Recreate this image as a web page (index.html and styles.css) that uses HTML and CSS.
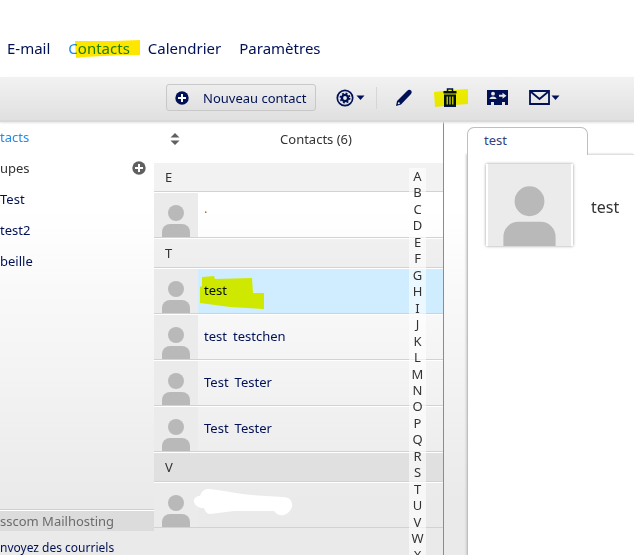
FILE: index.html
```
<!DOCTYPE html>
<html lang="fr">

<head>
    <meta charset="UTF-8" />
    <title>Contacts</title>
    <link rel="stylesheet" href="styles.css">
</head>

<body>

    <!-- Silhouette réutilisée par toutes les photos -->
    <svg class="defs" width="0" height="0">
        <symbol id="person" viewBox="0 0 44 44">
            <circle cx="22" cy="20" r="8" />
            <path d="M8 44v-5a8 8 0 0 1 8-8h12a8 8 0 0 1 8 8v5z" />
        </symbol>
        <symbol id="plus" viewBox="0 0 14 14">
            <circle cx="7" cy="7" r="6.7" />
            <path d="M7 3v8M3 7h8" stroke="#fff" stroke-width="2" />
        </symbol>
        <symbol id="caret" viewBox="0 0 9 5">
            <path d="M0.5 0.5h8L4.500 5z" />
        </symbol>
    </svg>

    <nav class="nav">
        <a href="#">E-mail</a>
        <a href="#" class="active">Contacts
            <svg class="marker marker-nav" width="66" height="20" viewBox="0 0 66 20">
                <path d="M1 2L40 2L66 1L66 16L50 16L10 18L2 19z" fill="#ffe600" />
            </svg>
        </a>
        <a href="#">Calendrier</a>
        <a href="#">Paramètres</a>
    </nav>

    <div class="toolbar">
        <button class="new-contact">
            <svg width="14" height="14"><use href="#plus" /></svg>
            Nouveau contact
        </button>
        <button class="tool" aria-label="Options">
            <svg width="18" height="18" viewBox="0 0 18 18">
                <circle cx="9" cy="9" r="7.700" fill="none" stroke="#001155" stroke-width="1.700" />
                <circle cx="9" cy="9" r="3.100" fill="none" stroke="#001155" stroke-width="2.400" />
                <circle cx="9" cy="9" r="4.700" fill="none" stroke="#001155" stroke-width="1.600" stroke-dasharray="1.850 1.850" />
            </svg>
            <svg width="9" height="5"><use href="#caret" /></svg>
        </button>
        <span class="separator"></span>
        <button class="tool" aria-label="Modifier">
            <svg width="18" height="18" viewBox="0 0 18 18">
                <path d="M1 17l1-5L12 2c1.500-1.500 3-1.500 4-.5s1 2.500-.5 4L6 15.500z" />
                <circle cx="3.800" cy="14.200" r="1" fill="#e8e8e8" />
            </svg>
        </button>
        <button class="tool trash" aria-label="Supprimer">
            <svg width="14" height="20" viewBox="0 0 14 20">
                <path d="M4.500 3.500v-2.500h5v2.500" fill="none" stroke="#001155" stroke-width="1.500" />
                <path d="M0.500 3h13v2.500h-13zM1 6.500h12v12.500h-12z" />
                <path d="M4.200 8.500v8M7 8.500v8M9.800 8.500v8" stroke="#e8e8e8" stroke-width="1.200" />
            </svg>
            <svg class="marker marker-trash" width="34" height="20" viewBox="0 0 34 20">
                <path d="M0 4L17 2L34 1L34 16L20 17L1 19z" fill="#ffff00" />
            </svg>
        </button>
        <button class="tool card" aria-label="Carte de visite">
            <svg width="21" height="15" viewBox="0 0 21 15">
                <path d="M0 0h21v15h-3v-3h-3v3h-8v-3h-3v3h-4z" />
                <g fill="#e8e8e8">
                    <circle cx="6" cy="3.700" r="1.900" />
                    <path d="M2.500 9c0-3.500 7-3.500 7 0zM12 4.700h3.500v-2l4 3-4 3v-2h-3.500z" />
                </g>
            </svg>
        </button>
        <button class="tool" aria-label="Envoyer">
            <svg width="21" height="15" viewBox="0 0 21 15">
                <path d="M1 1h19v13h-19z M1.500 1.500l9 7.500 9-7.500" fill="none" stroke="#001155" stroke-width="1.800" />
            </svg>
            <svg width="9" height="5"><use href="#caret" /></svg>
        </button>
    </div>

    <main class="content">
        <aside class="sidebar">
            <a href="#" class="active">tacts</a>
            <div class="groups-title">
                upes
                <button class="add" aria-label="Ajouter"><svg width="14" height="14"><use href="#plus" /></svg></button>
            </div>
            <a href="#">Test</a>
            <a href="#">test2</a>
            <a href="#">beille</a>
            <div class="promo">
                <div class="promo-title">sscom Mailhosting</div>
                <a href="#">nvoyez des courriels</a>
            </div>
        </aside>

        <section class="list">
            <div class="list-header">
                <button class="sort" aria-label="Trier">
                    <svg width="10" height="12" viewBox="0 0 10 12">
                        <path d="M5 0l4.500 4.500h-9zM5 12l4.500-4.500h-9z" />
                    </svg>
                </button>
                <span>Contacts (6)</span>
            </div>

            <h2 class="letter">E</h2>
            <div class="row">
                <svg class="avatar"><use href="#person" /></svg>
                <span class="dot">.</span>
            </div>

            <h2 class="letter">T</h2>
            <div class="row selected">
                <svg class="avatar"><use href="#person" /></svg>
                <span>test</span>
                <svg class="marker marker-row" width="65" height="34" viewBox="0 0 65 34">
                    <path d="M2 1L14 0L15 3L52 2L53 17L64 17L64 33L30 31L0 27L0 11L2 10z" fill="#fffa00" />
                </svg>
            </div>
            <div class="row">
                <svg class="avatar"><use href="#person" /></svg>
                <span>test</span><span>testchen</span>
            </div>
            <div class="row">
                <svg class="avatar"><use href="#person" /></svg>
                <span>Test</span><span>Tester</span>
            </div>
            <div class="row">
                <svg class="avatar"><use href="#person" /></svg>
                <span>Test</span><span>Tester</span>
            </div>

            <h2 class="letter">V</h2>
            <div class="row">
                <svg class="avatar"><use href="#person" /></svg>
                <svg class="eraser" width="99" height="28" viewBox="0 0 99 28">
                    <path d="M6 7C8 2 10 0 14 0C28 1 44 5 58 6L89 8C97 8 99 14 98 18C95 26 86 30 80 22L40 22L16 25C13 25 11 22 10 19C-2 19-3 7 6 7z" fill="#fff" />
                </svg>
            </div>

            <div class="index">
                <span>A</span><span>B</span><span>C</span><span>D</span><span>E</span><span>F</span><span>G</span>
                <span>H</span><span>I</span><span>J</span><span>K</span><span>L</span><span>M</span><span>N</span>
                <span>O</span><span>P</span><span>Q</span><span>R</span><span>S</span><span>T</span><span>U</span>
                <span>V</span><span>W</span><span>X</span>
            </div>
        </section>

        <section class="detail">
            <div class="tabs">
                <a href="#" class="tab">test</a>
            </div>
            <div class="panel">
                <svg class="photo" viewBox="0 0 44 44"><use href="#person" /></svg>
                <h1>test</h1>
            </div>
        </section>
    </main>

</body>

</html>
```
FILE: styles.css
```
* {
    box-sizing: border-box;
}

body {
    margin: 0;
    height: 100vh;
    overflow: hidden;
    display: flex;
    flex-direction: column;
    font-family: "Noto Sans", "Open Sans", sans-serif;
    font-size: 13px;
    line-height: 20px;
    color: #333;
    background: #fff;
}

a {
    color: #001155;
    text-decoration: none;
}

a.active {
    color: #1f8ceb;
}

button {
    padding: 0;
    border: 0;
    background: none;
    font: inherit;
    color: #001155;
    cursor: pointer;
}

svg {
    display: block;
    flex: none;
    fill: #001155;
}

.defs {
    position: absolute;
}

/* Surlignages */
.marker {
    position: absolute;
    mix-blend-mode: multiply;
    pointer-events: none;
}

.marker-nav {
    top: 1px;
    left: 6px;
}

.marker-trash {
    top: 0;
    left: -9px;
}

.marker-row {
    top: 7px;
    left: 46px;
}

/* Navigation */
.nav {
    display: flex;
    gap: 18px;
    height: 77px;
    flex: none;
    padding: 38px 7px 0;
    font-size: 15px;
}

.nav a {
    position: relative;
}

/* Barre d'outils */
.toolbar {
    display: flex;
    align-items: center;
    height: 45px;
    flex: none;
    padding: 0 0 2px 166px;
    background: linear-gradient(#f2f2f2, #e0e0e1);
    border-bottom: 2px solid #d9d9da;
    box-shadow: 0 1px 2px #e4e4e4;
    z-index: 1;
}

.new-contact {
    display: flex;
    align-items: center;
    gap: 14px;
    height: 27px;
    padding: 0 9px 0 8px;
    margin-right: 20px;
    border: 1px solid #c8c8c8;
    border-radius: 3px;
    background: linear-gradient(#eee, #e0e0e0);
    white-space: nowrap;
}

.tool {
    position: relative;
    display: flex;
    align-items: center;
    gap: 1px;
    margin-right: 30px;
}

.tool:nth-child(2) {
    gap: 2px;
    margin-right: 11px;
}

.tool.card {
    margin-right: 21px;
}

.separator {
    width: 1px;
    height: 22px;
    margin-right: 18px;
    background: #d6d6d6;
}

/* Colonnes */
.content {
    display: flex;
    flex: 1;
    min-height: 0;
    background: linear-gradient(#fff 20%, #eaeaea 88%);
}

.sidebar {
    display: flex;
    flex-direction: column;
    gap: 11px;
    width: 154px;
    flex: none;
    padding-top: 5px;
}

.groups-title {
    display: flex;
    justify-content: space-between;
    align-items: center;
    padding-right: 8px;
}

.add svg,
.sort svg {
    fill: #606060;
}

.promo {
    margin-top: auto;
    border-top: 1px solid #d0d0d0;
}

.promo-title {
    height: 21px;
    margin-bottom: 7px;
    border-top: 1px solid #fff;
    background: #dcdcdc;
    color: #6c6c6c;
}

.promo a {
    display: block;
    height: 17px;
    font-size: 12px;
    white-space: nowrap;
}

.list {
    position: relative;
    width: 290px;
    flex: none;
    overflow: hidden;
    border-right: 1px solid #8c8c8c;
}

.list-header {
    display: flex;
    align-items: center;
    height: 40px;
    padding: 0 16px 6px;
}

.list-header span {
    flex: 1;
    padding-left: 25px;
    text-align: center;
}

.letter {
    height: 30px;
    margin: 0;
    padding: 4px 11px;
    border-top: 1px solid #fff;
    border-bottom: 1px solid #d2d2d2;
    background: rgba(0, 0, 0, 0.05);
    font-size: 13px;
    font-weight: normal;
}

.row {
    position: relative;
    display: flex;
    gap: 6px;
    height: 46px;
    border-top: 1px solid #fff;
    border-bottom: 1px solid #d2d2d2;
    line-height: 42px;
    color: #001155;
}

.row.selected {
    background: #cfedff;
}

.avatar {
    width: 44px;
    height: 44px;
    background: #ebebeb;
    fill: #b9b9b9;
}

.dot {
    color: #b06a30;
    line-height: 30px;
}

.eraser {
    position: absolute;
    top: 6px;
    left: 40px;
}

.index {
    position: absolute;
    top: 46px;
    right: 17px;
    display: grid;
    grid-auto-rows: 1fr;
    width: 17px;
    height: 395px;
    background: rgba(255, 255, 255, 0.6);
    line-height: 16px;
    text-align: center;
}

/* Fiche */
.detail {
    display: flex;
    flex-direction: column;
    flex: 1;
    min-width: 0;
    padding-left: 23px;
}

.tabs {
    height: 32px;
    flex: none;
    padding-top: 5px;
    background: #fff;
}

.tab {
    position: relative;
    display: block;
    width: 121px;
    height: 28px;
    padding: 2px 16px;
    border: 1px solid #bfbfbf;
    border-bottom: 0;
    border-radius: 7px 7px 0 0;
    background: #fff;
    color: #334080;
}

.panel {
    display: flex;
    flex: 1;
    gap: 18px;
    padding: 9px 18px;
    border-top: 1px solid #e0e0e0;
    border-left: 1px solid #bfbfbf;
    box-shadow: -1px 0 2px #ccc;
    background: #fff;
}

.photo {
    width: 87px;
    height: 82px;
    border: solid #fff;
    border-width: 0 2px;
    background: #ebebeb;
    box-shadow: 0 0 3px #999;
    fill: #b9b9b9;
}

h1 {
    margin: 33px 0 0;
    font-size: 16px;
    font-weight: normal;
}
```
